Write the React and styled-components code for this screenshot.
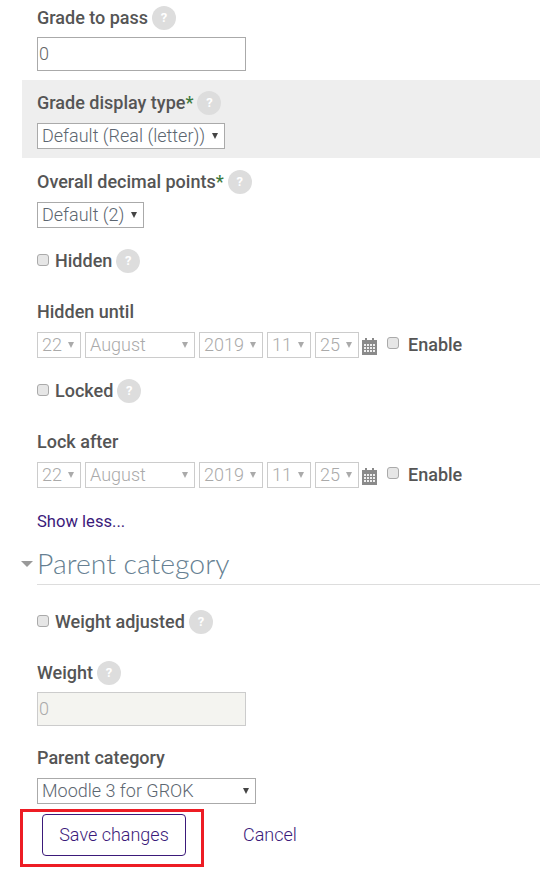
import React from 'react';
import styled, { createGlobalStyle } from 'styled-components';

const GlobalStyle = createGlobalStyle`
  html, body {
    margin: 0;
    padding: 0;
    background: #fff;
  }
  body {
    font-family: Roboto, "Liberation Sans", sans-serif;
    font-size: 18px;
    color: #555;
  }
`;

const Page = styled.div`
  width: 540px;
  height: 869px;
  overflow: hidden;
  box-sizing: border-box;
`;

const Section = styled.div`
  box-sizing: border-box;
  height: ${props => props.h}px;
  padding: ${props => props.top || 0}px 0 0 37px;
`;

const ShadedSection = styled(Section)`
  margin-left: 22px;
  padding-left: 15px;
  background: #eee;
`;

const LabelRow = styled.div`
  display: flex;
  align-items: center;
  height: 24px;
  font-weight: 500;
  font-size: 18px;
  line-height: 24px;
  color: #555;
`;

const Required = styled.span`
  color: #3d7a3d;
`;

const Help = styled.span`
  display: inline-flex;
  align-items: center;
  justify-content: center;
  width: 24px;
  height: 24px;
  margin-left: 4px;
  border-radius: 50%;
  background: #ddd;
  color: #fff;
  font-size: 13px;
  font-weight: 700;
`;

const TextInput = styled.div`
  box-sizing: border-box;
  width: 209px;
  height: 34px;
  margin-top: 7px;
  padding-left: 1px;
  border: 1px solid ${props => (props.disabled ? '#ccc' : '#aaa')};
  background: ${props => (props.disabled ? '#f4f4f0' : '#fff')};
  color: ${props => (props.disabled ? '#aaa' : '#666')};
  font-weight: 300;
  font-size: 18px;
  line-height: 32px;
`;

const Select = styled.div`
  box-sizing: border-box;
  display: flex;
  align-items: center;
  justify-content: space-between;
  flex: none;
  width: ${props => props.w}px;
  height: 26px;
  padding: 0 6px 2px 4px;
  border: 1px solid ${props => (props.disabled ? '#ccc' : '#aaa')};
  background: #fff;
  color: ${props => (props.disabled ? '#aaa' : '#5c6670')};
  font-weight: 300;
  font-size: 18px;
  white-space: nowrap;
`;

const Caret = styled.span`
  flex: none;
  width: 0;
  height: 0;
  margin: 2px 0 0 4px;
  border-left: 3.5px solid transparent;
  border-right: 3.5px solid transparent;
  border-top: 6px solid ${props => (props.disabled ? '#aaa' : '#444')};
`;

const Check = styled.span`
  flex: none;
  box-sizing: border-box;
  width: 12px;
  height: 12px;
  margin: -2px ${props => props.gap || 6}px 0 0;
  border: 1px solid #aaa;
  border-radius: 3px;
  background: #e6e6e6;
`;

const DateRow = styled.div`
  display: flex;
  align-items: center;
  gap: 4px;
  height: 26px;
  margin-top: 8px;
`;

const CalendarWrap = styled.span`
  display: flex;
  margin: 3px 0 0 -1px;
`;

const EnableLabel = styled.label`
  display: flex;
  align-items: center;
  margin-left: 6px;
  padding-bottom: 2px;
  font-weight: 500;
  font-size: 18px;
  color: #555;
`;

const FieldSelect = styled.div`
  margin-top: 8px;
  display: flex;
`;

const ShowLess = styled.a`
  display: block;
  color: #3b1a7a;
  font-weight: 400;
  font-size: 16.6px;
  line-height: 24px;
`;

const HeadingRow = styled.div`
  display: flex;
  align-items: flex-end;
  height: 52px;
  margin-top: -1px;
  margin-left: 21px;
`;

const HeadingCaret = styled.span`
  flex: none;
  width: 0;
  height: 0;
  margin: 0 4px 18px 0;
  border-left: 6.5px solid transparent;
  border-right: 6.5px solid transparent;
  border-top: 6px solid #999;
`;

const Heading = styled.h3`
  flex: 1;
  box-sizing: border-box;
  height: 41px;
  margin: 0;
  border-bottom: 1px solid #ddd;
  font-family: Lato, "Open Sans", sans-serif;
  font-weight: 300;
  font-size: 28.4px;
  line-height: 38px;
  color: #667f92;
`;

const Actions = styled.div`
  display: flex;
  align-items: center;
  margin: 5px 0 0 20px;
`;

const Highlight = styled.div`
  box-sizing: border-box;
  width: 184px;
  height: 58px;
  padding: 2px 0 0 19px;
  border: 3px solid #ed1c24;
`;

const SaveButton = styled.button`
  box-sizing: border-box;
  width: 144px;
  height: 42px;
  padding: 0 0 2px;
  border: 1px solid #3b1a7a;
  border-radius: 4px;
  background: #fff;
  color: #3b1a7a;
  font: 300 18px Roboto, sans-serif;
`;

const CancelLink = styled.a`
  margin: -8px 0 0 39px;
  color: #3b1a7a;
  font-weight: 300;
  font-size: 18px;
`;

const Calendar = () => (
  <svg width="15" height="17" viewBox="0 0 15 17">
    <rect x="0" y="2" width="15" height="15" fill="#8a8a8a" />
    <rect x="3" y="0" width="2" height="4" fill="#8a8a8a" />
    <rect x="10" y="0" width="2" height="4" fill="#8a8a8a" />
    {[6, 9, 12].map(y =>
      [2, 5, 8, 11].map(x => (
        <rect key={`${x}-${y}`} x={x} y={y} width="2" height="2" fill="#eee" />
      )),
    )}
  </svg>
);

const DateFields = () => (
  <DateRow>
    <Select w={44} disabled>22<Caret disabled /></Select>
    <Select w={110} disabled>August<Caret disabled /></Select>
    <Select w={64} disabled>2019<Caret disabled /></Select>
    <Select w={44} disabled>11<Caret disabled /></Select>
    <Select w={44} disabled>25<Caret disabled /></Select>
    <CalendarWrap><Calendar /></CalendarWrap>
    <EnableLabel><Check gap={9} />Enable</EnableLabel>
  </DateRow>
);

const App = () => (
  <Page>
    <GlobalStyle />
    <Section h={80} top={6}>
      <LabelRow>Grade to pass<Help>?</Help></LabelRow>
      <TextInput>0</TextInput>
    </Section>
    <ShadedSection h={78} top={11}>
      <LabelRow>Grade display type<Required>*</Required><Help>?</Help></LabelRow>
      <FieldSelect>
        <Select w={188}>Default (Real (letter))<Caret /></Select>
      </FieldSelect>
    </ShadedSection>
    <Section h={91} top={12}>
      <LabelRow>Overall decimal points<Required>*</Required><Help>?</Help></LabelRow>
      <FieldSelect>
        <Select w={107}>Default (2)<Caret /></Select>
      </FieldSelect>
    </Section>
    <Section h={51}>
      <LabelRow><Check />Hidden<Help>?</Help></LabelRow>
    </Section>
    <Section h={79}>
      <LabelRow>Hidden until</LabelRow>
      <DateFields />
    </Section>
    <Section h={51}>
      <LabelRow><Check />Locked<Help>?</Help></LabelRow>
    </Section>
    <Section h={79}>
      <LabelRow>Lock after</LabelRow>
      <DateFields />
    </Section>
    <Section h={25} top={1}>
      <ShowLess>Show less...</ShowLess>
    </Section>
    <HeadingRow>
      <HeadingCaret />
      <Heading>Parent category</Heading>
    </HeadingRow>
    <Section h={76} top={25}>
      <LabelRow><Check />Weight adjusted<Help>?</Help></LabelRow>
    </Section>
    <Section h={85}>
      <LabelRow>Weight<Help>?</Help></LabelRow>
      <TextInput disabled>0</TextInput>
    </Section>
    <Section h={58}>
      <LabelRow>Parent category</LabelRow>
      <FieldSelect>
        <Select w={219}>Moodle 3 for GROK<Caret /></Select>
      </FieldSelect>
    </Section>
    <Actions>
      <Highlight>
        <SaveButton>Save changes</SaveButton>
      </Highlight>
      <CancelLink>Cancel</CancelLink>
    </Actions>
  </Page>
);

export default App;
